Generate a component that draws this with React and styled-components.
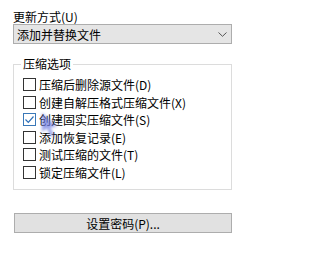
import React from 'react'
import styled, { createGlobalStyle } from 'styled-components'

const GlobalStyle = createGlobalStyle`
    body {
        margin: 0;
        background: #ffffff;
        font-family: "Noto Sans CJK SC", "Noto Sans", sans-serif;
        font-size: 12px;
        color: #000000;
    }
`

const Panel = styled.div`
    position: relative;
    width: 269px;
    height: 254px;
    padding: 10px 0 0 13px;
    box-sizing: border-box;
    display: flex;
    flex-direction: column;
`

const FieldLabel = styled.div`
    line-height: 14px;
    height: 14px;
`

const Combo = styled.div`
    width: 219px;
    height: 20px;
    box-sizing: border-box;
    border: 1px solid #adadad;
    background: #e5e5e5;
    display: flex;
    align-items: center;
    justify-content: space-between;
    padding: 0 4px 0 3px;
    font-size: 12px;
`

const GroupBox = styled.fieldset`
    margin: 13px 0 0 0;
    width: 219px;
    box-sizing: border-box;
    min-width: 0;
    border: 1px solid #dcdcdc;
    padding: 0 0 8px 7px;

    legend {
        padding: 0 2px;
        line-height: 14px;
    }
`

const OptionList = styled.div`
    display: flex;
    flex-direction: column;
    padding: 5px 0 0 2px;
`

const OptionRow = styled.label`
    display: flex;
    align-items: center;
    height: 17.5px;
    gap: 3px;
`

const Box = styled.span`
    width: 13px;
    height: 13px;
    box-sizing: border-box;
    border: 1px solid ${pr => pr.checked ? '#3a78b8' : '#333333'};
    background: #ffffff;
    display: flex;
    align-items: center;
    justify-content: center;
    flex: none;
`

const PasswordButton = styled.button`
    margin: 23px 0 0 1px;
    width: 218px;
    height: 20px;
    box-sizing: border-box;
    border: 1px solid #adadad;
    background: #e1e1e1;
    font-family: inherit;
    font-size: 12px;
    color: #000000;
    padding: 0;
`

const CursorGhost = styled.svg`
    position: absolute;
    left: 38px;
    top: 110px;
    pointer-events: none;
`

const options = [
    { text: '压缩后删除源文件(D)' },
    { text: '创建自解压格式压缩文件(X)' },
    { text: '创建固实压缩文件(S)', checked: true },
    { text: '添加恢复记录(E)' },
    { text: '测试压缩的文件(T)' },
    { text: '锁定压缩文件(L)' },
]

const App = () => {
    return (
        <>
            <GlobalStyle />
            <Panel>
                <FieldLabel>更新方式(U)</FieldLabel>
                <Combo>
                    <span>添加并替换文件</span>
                    <svg width="9" height="5" viewBox="0 0 9 5">
                        <path d="M0.5 0.5 L4.5 4.3 L8.5 0.5" fill="none" stroke="#555" strokeWidth="1" />
                    </svg>
                </Combo>
                <GroupBox>
                    <legend>压缩选项</legend>
                    <OptionList>
                        {options.map(opt => (
                            <OptionRow key={opt.text}>
                                <Box checked={opt.checked}>
                                    {opt.checked && (
                                        <svg width="11" height="11" viewBox="0 0 11 11">
                                            <path d="M1.5 5.5 L4.3 8.3 L9.5 2.5" fill="none" stroke="#2d6fb8" strokeWidth="1.2" />
                                        </svg>
                                    )}
                                </Box>
                                <span>{opt.text}</span>
                            </OptionRow>
                        ))}
                    </OptionList>
                </GroupBox>
                <PasswordButton>设置密码(P)...</PasswordButton>

                {/* blurred mouse pointer caught in the screenshot */}
                <CursorGhost width="24" height="32" viewBox="0 0 24 32">
                    <defs>
                        <filter id="blur" x="-50%" y="-50%" width="200%" height="200%">
                            <feGaussianBlur stdDeviation="1.5" />
                        </filter>
                    </defs>
                    <path d="M4 3 L4 22 L9 18 L13 27 L16 25 L12 17 L19 17 Z" fill="#6a78e0" opacity="0.7" filter="url(#blur)" />
                </CursorGhost>
            </Panel>
        </>
    )
}

export default App
